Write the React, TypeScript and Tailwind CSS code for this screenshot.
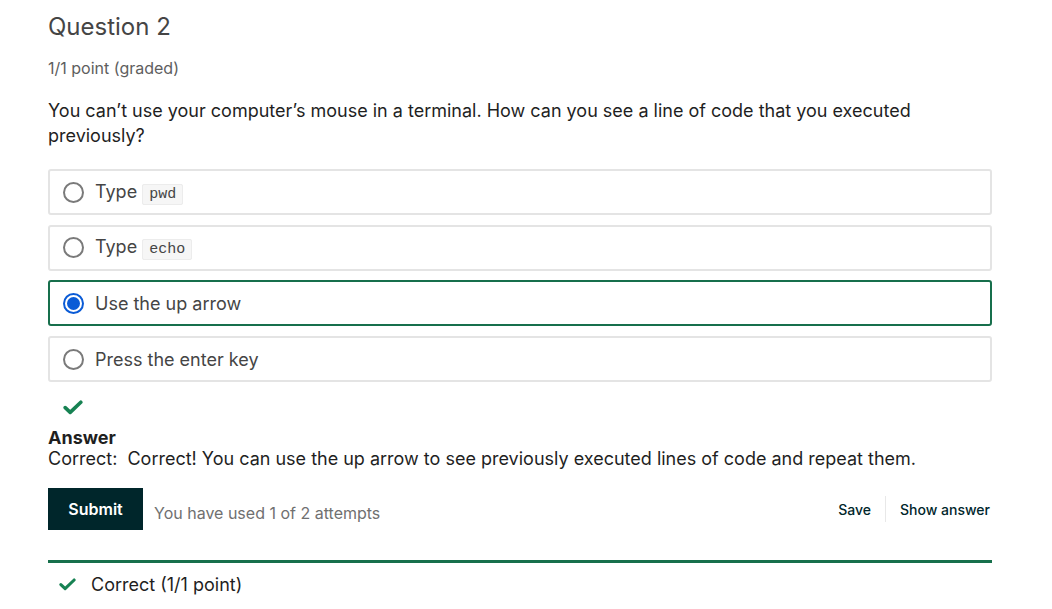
type Option = {
  id: string;
  label: string;
  code?: string;
  selected?: boolean;
};

const OPTIONS: Option[] = [
  { id: "a", label: "Type", code: "pwd" },
  { id: "b", label: "Type", code: "echo" },
  { id: "c", label: "Use the up arrow", selected: true },
  { id: "d", label: "Press the enter key" },
];

function CheckIcon({ className }: { className?: string }) {
  return (
    <svg viewBox="0 0 20 15" className={className} fill="none" aria-hidden="true">
      <path
        d="M2.2 7.6 L7.2 12.4 L17.8 2.2"
        stroke="currentColor"
        strokeWidth="3.6"
        strokeLinecap="round"
        strokeLinejoin="round"
      />
    </svg>
  );
}

function Radio({ checked }: { checked?: boolean }) {
  if (checked) {
    return (
      <span className="flex h-[21px] w-[21px] shrink-0 items-center justify-center rounded-full border-2 border-[#0a5bd6] bg-white">
        <span className="h-[13px] w-[13px] rounded-full bg-[#0a5bd6]" />
      </span>
    );
  }
  return (
    <span className="h-[21px] w-[21px] shrink-0 rounded-full border-2 border-[#7a7a7a] bg-white" />
  );
}

function OptionRow({ option }: { option: Option }) {
  return (
    <label
      className={
        option.selected
          ? "flex h-[46px] items-center gap-[11px] rounded-[3px] border-2 border-[#176f4c] pl-[13px]"
          : "flex h-[46px] items-center gap-[11px] rounded-[3px] border-2 border-[#e4e4e4] pl-[13px]"
      }
    >
      <Radio checked={option.selected} />
      <span className="text-[18px] text-[#454545]">
        {option.label}
        {option.code ? (
          <>
            {" "}
            <code className="rounded-[2px] border border-[#ececec] bg-[#f6f6f6] px-[6px] py-[1px] font-['Liberation_Mono',monospace] text-[15px] text-[#454545]">
              {option.code}
            </code>
          </>
        ) : null}
      </span>
    </label>
  );
}

export default function App() {
  return (
    <div className="min-h-[609px] bg-white font-['Inter',sans-serif] antialiased">
      <div className="ml-[48px] w-[944px] pt-[9px]">
        <h2 className="text-[24px] leading-[36px] font-normal text-[#454545]">
          Question 2
        </h2>
        <p className="mt-[12px] text-[16px] leading-[22px] text-[#5e5e5e]">
          1/1 point (graded)
        </p>
        <p className="mt-[19px] text-[18px] leading-[25px] text-[#1f1f1f]">
          You can’t use your computer’s mouse in a terminal. How can you see a
          line of code that you executed previously?
        </p>

        <div className="mt-[21px] flex flex-col gap-[9.7px]">
          {OPTIONS.map((option) => (
            <OptionRow key={option.id} option={option} />
          ))}
        </div>

        <div className="mt-[18px] pl-[15px] text-[#178253]">
          <CheckIcon className="h-[15px] w-[20px]" />
        </div>

        <div className="mt-[12px] text-[18px] leading-[21px] text-[#1f1f1f]">
          <p className="font-bold">Answer</p>
          <p>
            Correct:&nbsp; Correct! You can use the up arrow to see previously
            executed lines of code and repeat them.
          </p>
        </div>

        <div className="mt-[19px] flex items-center">
          <button className="h-[42px] w-[95px] bg-[#00262b] text-[16px] font-semibold text-white">
            Submit
          </button>
          <span className="ml-[11px] mt-[8px] text-[16px] text-[#707070]">
            You have used 1 of 2 attempts
          </span>
          <div className="ml-auto flex items-center self-center">
            <button className="pr-[14px] text-[14px] font-medium text-[#00262b]">
              Save
            </button>
            <span className="h-[26px] w-px bg-[#e8e8e8]" />
            <button className="pl-[14px] pr-[2px] text-[14px] font-medium text-[#00262b]">
              Show answer
            </button>
          </div>
        </div>

        <div className="mt-[30px] h-[3px] bg-[#17704c]" />

        <div className="mt-[9px] flex items-center pl-[11px]">
          <CheckIcon className="h-[13px] w-[17px] text-[#178253]" />
          <span className="ml-[15px] text-[18px] leading-[25px] text-[#1f1f1f]">
            Correct (1/1 point)
          </span>
        </div>
      </div>
    </div>
  );
}
